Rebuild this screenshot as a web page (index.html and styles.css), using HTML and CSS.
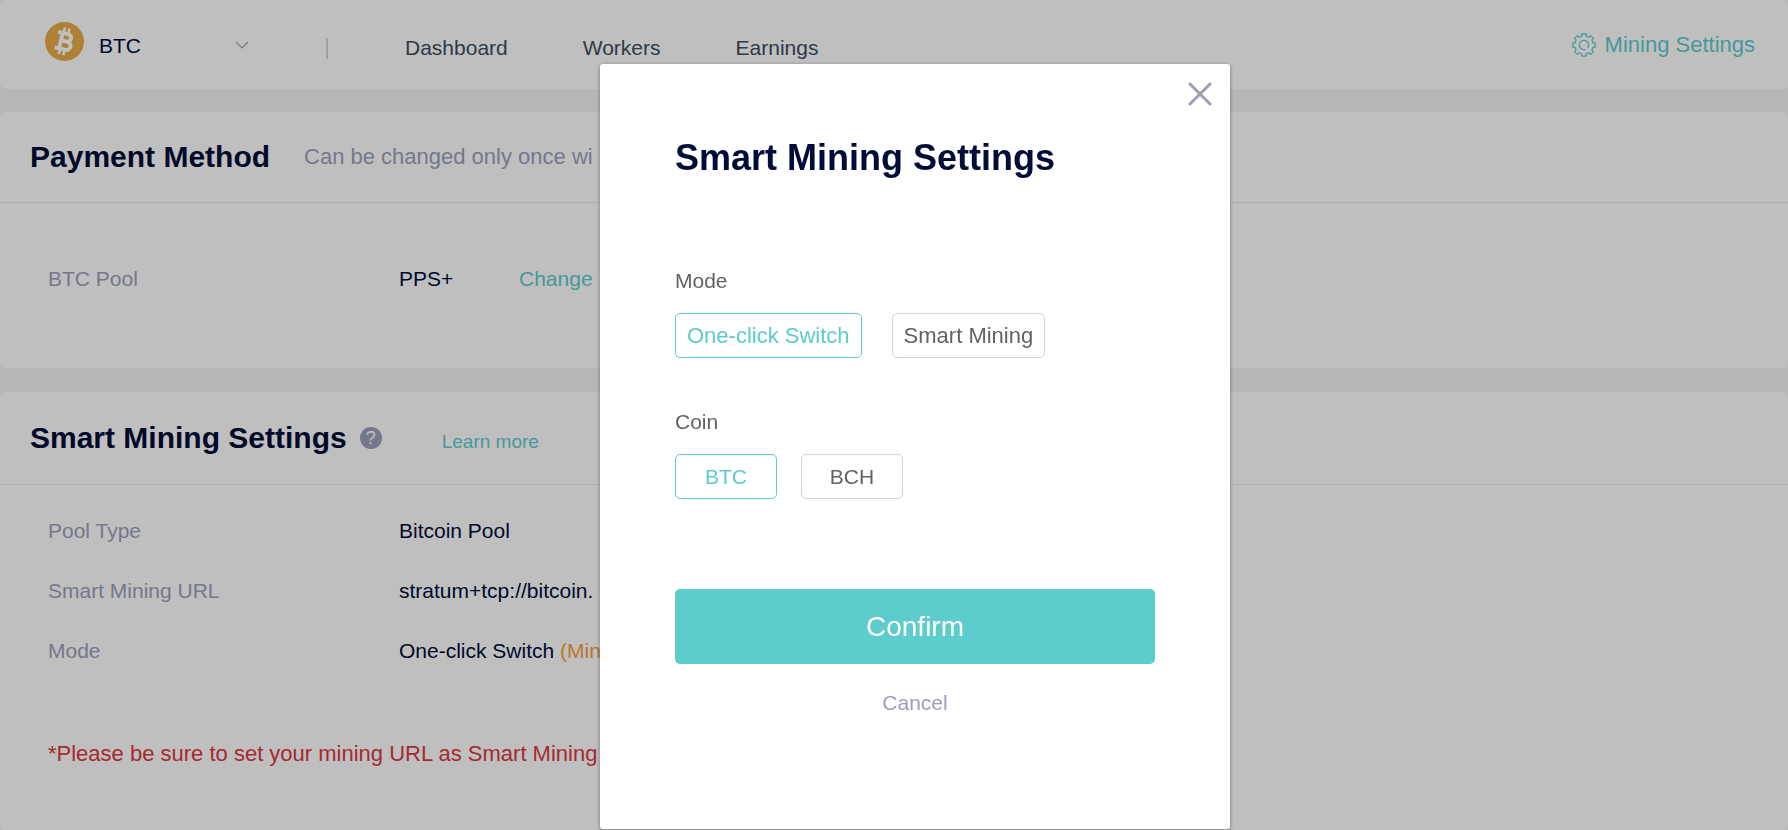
FILE: index.html
```html
<!DOCTYPE html>
<html lang="en">
<head>
<meta charset="utf-8">
<meta name="viewport" content="width=device-width, initial-scale=1">
<title>Mining Settings</title>
<link rel="stylesheet" href="styles.css">
</head>
<body>
<div class="page">
  <header class="topbar">
    <div class="coin-picker">
      <svg class="coin-icon" viewBox="0 0 40 40" aria-hidden="true">
        <circle cx="20" cy="20" r="20" fill="#eaad48"/>
        <g transform="rotate(13 20 20)" fill="none" stroke="#fff">
          <path d="M11.500 11.800h10.500a3.800 3.800 0 0 1 0 7.700h-5.500M16.500 19.700h6.500a4.200 4.200 0 0 1 0 8.400H11.500M16.200 11.500v17" stroke-width="4"/>
          <path d="M17.200 6v5M22 6v5M17.200 29v5M22 29v5" stroke-width="2.600"/>
        </g>
      </svg>
      <select class="coin-select" aria-label="Coin">
        <option>BTC</option>
      </select>
      <svg class="chevron" viewBox="0 0 14 8" aria-hidden="true"><path d="M1 1l6 6 6-6" fill="none" stroke="#9d9fba" stroke-width="1.2"/></svg>
    </div>
    <span class="separator"></span>
    <nav class="nav">
      <a href="#dashboard">Dashboard</a>
      <a href="#workers">Workers</a>
      <a href="#earnings">Earnings</a>
    </nav>
    <a class="settings-link" href="#settings">
      <svg class="gear" viewBox="0 0 24 24" aria-hidden="true" fill="none" stroke="currentColor" stroke-width="1.2" stroke-linejoin="round">
        <path d="M9.800 .8h4.400v2.200l2.800 1.200 1.700-1.600 2.800 2.800-1.600 1.700 1.100 2.700h2.200v4.400h-2.200l-1.100 2.700 1.600 1.700-2.800 2.800-1.700-1.600-2.800 1.200v2.200H9.800v-2.200l-2.800-1.200-1.700 1.600-2.800-2.800 1.600-1.700L3 14.200H.8V9.800H3l1.100-2.700-1.600-1.700 2.800-2.800L7 4.200 9.800 3z"/>
        <path d="M15.600 15a4.700 4.700 0 1 0-3.600 1.700h1.500"/>
      </svg>
      Mining Settings
    </a>
  </header>

  <section class="card">
    <div class="card-head">
      <h2 class="card-title">Payment Method</h2>
      <p class="card-note">Can be changed only once wi</p>
    </div>
    <dl class="payment-rows">
      <div class="row">
        <dt>BTC Pool</dt>
        <dd>PPS+</dd>
        <dd><a class="link change" href="#change">Change</a></dd>
      </div>
    </dl>
  </section>

  <section class="card card-last">
    <div class="card-head">
      <h2 class="card-title">Smart Mining Settings</h2>
      <button class="help" type="button" aria-label="Help">?</button>
      <a class="link learn-more" href="#learn">Learn more</a>
    </div>
    <dl class="mining-rows">
      <div class="row"><dt>Pool Type</dt><dd>Bitcoin Pool</dd></div>
      <div class="row"><dt>Smart Mining URL</dt><dd>stratum+tcp://bitcoin.</dd></div>
      <div class="row"><dt>Mode</dt><dd>One-click Switch <span class="mining-now">(Min</span></dd></div>
    </dl>
    <p class="warning">*Please be sure to set your mining URL as Smart Mining U</p>
  </section>
</div>

<div class="overlay">
  <form class="modal" role="dialog" aria-labelledby="modal-title">
    <button class="close" type="button" aria-label="Close">
      <svg class="close-icon" viewBox="0 0 24 24" aria-hidden="true"><path d="M2 2l20 20M22 2L2 22" stroke="#9d9fba" stroke-width="3" stroke-linecap="round"/></svg>
    </button>
    <h1 class="modal-title" id="modal-title">Smart Mining Settings</h1>
    <fieldset class="group">
      <legend>Mode</legend>
      <div class="options options-mode">
        <label class="option"><input type="radio" name="mode" checked>One-click Switch</label>
        <label class="option"><input type="radio" name="mode">Smart Mining</label>
      </div>
    </fieldset>
    <fieldset class="group">
      <legend>Coin</legend>
      <div class="options options-coin">
        <label class="option"><input type="radio" name="coin" checked>BTC</label>
        <label class="option"><input type="radio" name="coin">BCH</label>
      </div>
    </fieldset>
    <button class="confirm" type="submit">Confirm</button>
    <button class="cancel" type="button">Cancel</button>
  </form>
</div>
</body>
</html>
```
FILE: styles.css
```css
* {
  box-sizing: border-box;
}

body {
  margin: 0;
  overflow: hidden;
  background: #f4f4f7;
  color: #000d37;
  font-family: "Liberation Sans", Arial, sans-serif;
  font-size: 21px;
  line-height: 24px;
}

h1, h2, p, dl, dd {
  margin: 0;
}

a {
  color: inherit;
  text-decoration: none;
}

button, select {
  border: 0;
  padding: 0;
  background: none;
  color: inherit;
  font: inherit;
  cursor: pointer;
}

.page {
  display: flex;
  flex-direction: column;
  gap: 24px;
  min-height: 100vh;
  white-space: nowrap;
}

.topbar {
  display: flex;
  align-items: center;
  height: 89px;
  margin-bottom: -1px;
  padding: 0 33px 0 45px;
  border-radius: 6px;
  background: #fff;
}

.coin-picker {
  display: flex;
  align-items: center;
  width: 204px;
}

.coin-icon {
  width: 39px;
  height: 39px;
  margin-bottom: 6px;
}

.coin-select {
  flex: 1;
  margin-left: 15px;
  padding-top: 2px;
  appearance: none;
}

.chevron {
  width: 14px;
  height: 8px;
}

.separator {
  width: 2px;
  height: 21px;
  margin: 8px 77px 0 77px;
  background: #d6d6da;
}

.nav {
  display: flex;
  gap: 75px;
  padding-top: 7px;
  color: #3f4d5d;
}

.settings-link {
  display: flex;
  align-items: center;
  gap: 9px;
  margin-left: auto;
  color: #5dcccc;
  font-size: 22px;
}

.gear {
  width: 24px;
  height: 24px;
}

.card {
  border-radius: 6px;
  background: #fff;
}

.card-last {
  flex: 1;
}

.card-head {
  display: flex;
  align-items: center;
  height: 91px;
  padding: 0 30px;
  border-bottom: 1px solid #e9e9ee;
}

.card-last .card-head {
  height: 93px;
}

.card-title {
  font-size: 30px;
  line-height: 36px;
}

.card-note {
  margin-left: 34px;
  color: #9d9fba;
  font-size: 22px;
}

.help {
  width: 22px;
  height: 22px;
  margin-left: 13px;
  border-radius: 50%;
  background: #9d9fba;
  color: #fff;
  font-size: 18px;
  line-height: 22px;
}

.link {
  color: #5dcccc;
}

.learn-more {
  margin-left: 60px;
  padding-top: 7px;
  font-size: 19px;
}

.row {
  display: grid;
  grid-template-columns: 351px 120px auto;
  justify-content: start;
  align-items: center;
  height: 60px;
  padding-left: 48px;
}

.row dt {
  color: #9d9fba;
}

.payment-rows {
  padding: 46px 0 59px;
}

.mining-rows {
  padding-top: 16px;
}

.mining-now {
  color: #f99f37;
}

.warning {
  padding: 61px 48px 0;
  color: #dc3844;
  font-size: 22px;
}

.overlay {
  position: fixed;
  inset: 0;
  display: flex;
  justify-content: center;
  align-items: flex-start;
  padding: 64px 0 0 42px;
  background: rgba(0, 0, 0, 0.25);
}

.modal {
  position: relative;
  display: flex;
  flex-direction: column;
  width: 630px;
  padding: 72px 75px 114px;
  border-radius: 3px;
  background: #fff;
  box-shadow: 0 1px 4px rgba(0, 0, 0, 0.4);
}

.close {
  position: absolute;
  top: 18px;
  right: 18px;
  width: 24px;
  height: 24px;
}

.close-icon {
  display: block;
}

.modal-title {
  margin-bottom: 89px;
  font-size: 36px;
  line-height: 44px;
}

.group {
  min-width: 0;
  margin: 0 0 52px;
  padding: 0;
  border: 0;
  color: #606266;
}

.group legend {
  padding: 0;
}

.options {
  display: flex;
  padding-top: 20px;
}

.options-mode {
  gap: 30px;
  font-size: 22px;
}

.options-coin {
  gap: 24px;
}

.option {
  display: flex;
  align-items: center;
  justify-content: center;
  min-width: 102px;
  height: 45px;
  padding: 0 11px;
  border: 1px solid #d2d2df;
  border-radius: 5px;
  cursor: pointer;
}

.option input {
  position: absolute;
  opacity: 0;
}

.option:has(input:checked) {
  border-color: #5dcccc;
  color: #5dcccc;
}

.confirm {
  height: 75px;
  margin-top: 38px;
  border-radius: 5px;
  background: #5dcccc;
  color: #fff;
  font-size: 28px;
}

.cancel {
  align-self: center;
  margin-top: 27px;
  color: #9d9fba;
}
```
